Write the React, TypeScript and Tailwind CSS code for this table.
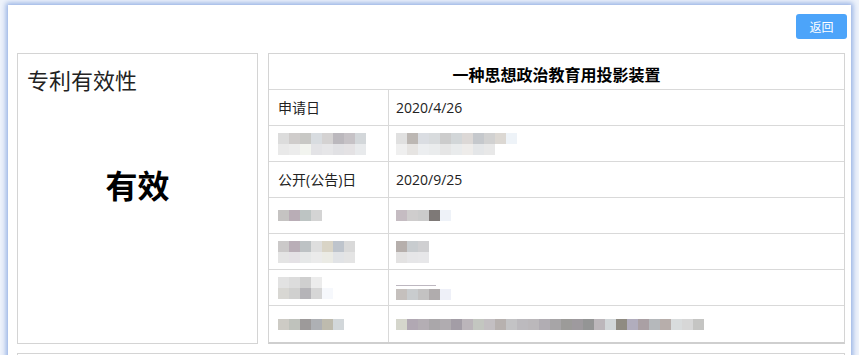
import React from "react";

type Row = { label?: string; value?: string; labelCells?: string[][]; valueCells?: string[][]; note?: boolean };

// pixelated (mosaicked) fields, one class per cell
const rows: Row[] = [
  { label: "申请日", value: "2020/4/26" },
  {
    labelCells: [
      ["bg-[#dcdcdc]", "bg-[#cfcccb]", "bg-[#c8c8c5]", "bg-[#d8dce0]", "bg-[#d4d2d2]", "bg-[#bbb8bd]", "bg-[#c6c2c6]", "bg-[#d3d7da]"],
      ["bg-[#e9e9e9]", "bg-[#ececec]", "bg-[#f2f4ef]", "bg-[#e3e3e6]", "bg-[#e6e6e8]", "bg-[#e1e1e4]", "bg-[#e4e2e4]", "bg-[#e8eaec]"],
    ],
    valueCells: [
      ["bg-[#e0e0e0]", "bg-[#bcb7b3]", "bg-[#dadde2]", "bg-[#d8dbdd]", "bg-[#cccccc]", "bg-[#d2d6d8]", "bg-[#dcd8d6]", "bg-[#c5c8cc]", "bg-[#d1d1d1]", "bg-[#dcd8d3]", "bg-[#eef3f8]"],
      ["bg-[#efefef]", "bg-[#e6e4e2]", "bg-[#eceef0]", "bg-[#eaeced]", "bg-[#e6e6e6]", "bg-[#e9ebec]", "bg-[#eeecea]", "bg-[#e4e6e8]", "bg-[#e8e8e8]", "bg-white", "bg-white"],
    ],
  },
  { label: "公开(公告)日", value: "2020/9/25" },
  {
    labelCells: [["bg-[#c5c3c2]", "bg-[#b9adb6]", "bg-[#bdc4c3]", "bg-[#d4d4d4]"]],
    valueCells: [["bg-[#c5bcc2]", "bg-[#cfcdcd]", "bg-[#cbcbcb]", "bg-[#7e7977]", "bg-[#eef2f8]"]],
  },
  {
    labelCells: [
      ["bg-[#cbc9c9]", "bg-[#b9aeb7]", "bg-[#bdc2c4]", "bg-[#dedede]", "bg-[#d9d4c6]", "bg-[#bec4cc]", "bg-[#d9d9d9]"],
      ["bg-[#e4e4e4]", "bg-[#e4e1e5]", "bg-[#e6e8e8]", "bg-[#ebebeb]", "bg-[#ebebe5]", "bg-[#e1e3e6]", "bg-[#e4e4e4]"],
    ],
    valueCells: [
      ["bg-[#b6afac]", "bg-[#c8cccf]", "bg-[#cfcfd1]"],
      ["bg-[#e3e2e2]", "bg-[#e6e6e8]", "bg-[#e7e7e9]"],
    ],
  },
  {
    labelCells: [
      ["bg-[#e2e2e2]", "bg-[#dcdcdc]", "bg-[#cfcfcf]", "bg-[#ececec]", "bg-white"],
      ["bg-[#d8d7d3]", "bg-[#d0d0cf]", "bg-[#b5b4b8]", "bg-[#d6d6d6]", "bg-[#f6f8fc]"],
    ],
    valueCells: [["bg-[#c5c0bd]", "bg-[#c9ccce]", "bg-[#c3c2c2]", "bg-[#b0acad]", "bg-[#eef0f8]"]],
    note: true,
  },
  {
    labelCells: [["bg-[#cdcbc5]", "bg-[#bfc2bc]", "bg-[#9d9a9a]", "bg-[#aeb0b4]", "bg-[#bebbae]", "bg-[#d2d7da]"]],
    valueCells: [
      [
        "bg-[#d5d6cc]", "bg-[#b1a8b3]", "bg-[#b4aeb4]", "bg-[#aaa7aa]", "bg-[#b0acb0]", "bg-[#a39da6]", "bg-[#bbb5ba]",
        "bg-[#c3c6c0]", "bg-[#c3bfc2]", "bg-[#b7b1af]", "bg-[#c3c3c5]", "bg-[#bcbabe]", "bg-[#bbb8bb]", "bg-[#b1adb3]",
        "bg-[#a7a5a7]", "bg-[#9c9b99]", "bg-[#9e9a9e]", "bg-[#949595]", "bg-[#bcb7bb]", "bg-[#d1d6d8]", "bg-[#8f8b82]",
        "bg-[#b1adbd]", "bg-[#aaa0a4]", "bg-[#b5b8bb]", "bg-[#b7aeab]", "bg-[#d9dcdd]", "bg-[#d7d7d7]", "bg-[#c5c5c3]",
      ],
    ],
  },
];

const Mosaic: React.FC<{ cells: string[][] }> = ({ cells }) => (
  <div className="flex flex-col blur-[0.4px]">
    {cells.map((line, i) => (
      <div key={i} className="flex">
        {line.map((c, j) => (
          <div key={j} className={`w-[11px] h-[11px] ${c}`} />
        ))}
      </div>
    ))}
  </div>
);

export default function App() {
  return (
    <div className="w-[859px] h-[355px] overflow-hidden bg-[#eef3fb] pl-[8px] pt-[5px] pr-[8px] font-['Open_Sans','Noto_Sans_CJK_SC',sans-serif] text-[#222]">
      <div className="bg-white h-[400px] shadow-[0_0_5px_2px_rgba(120,155,220,0.75)] pl-[9px] pr-[6px]">
        {/* top bar */}
        <div className="flex justify-end pt-[9px] pb-[14px] -mr-[2px]">
          <button className="w-[51px] h-[25px] rounded-[3px] bg-[#4ca4fa] text-white text-[12px] leading-none font-['Noto_Sans_CJK_SC',sans-serif]">
            返回
          </button>
        </div>

        <div className="flex gap-[10px]">
          {/* validity */}
          <div className="w-[241px] h-[291px] border border-[#d4d4d4] flex flex-col">
            <div className="pl-[9px] pt-[9px] text-[22px] leading-[33px] font-['Noto_Sans_CJK_SC',sans-serif]">专利有效性</div>
            <div className="mt-[68px] text-center text-[32px] leading-[40px] font-bold text-black font-['Noto_Sans_CJK_SC',sans-serif]">
              有效
            </div>
          </div>

          {/* details table */}
          <div className="flex-1 h-[291px] border border-[#d4d4d4] border-b-2 border-b-[#cfcfcf] flex flex-col">
            <div className="h-[36px] flex items-center justify-center border-b border-[#d9d9d9] text-[16px] font-bold text-black font-['Noto_Sans_CJK_SC',sans-serif] pt-[4px]">
              一种思想政治教育用投影装置
            </div>
            {rows.map((r, i) => (
              <div
                key={i}
                className={`grid grid-cols-[120px_1fr] h-[36px] text-[14px] ${i < rows.length - 1 ? "border-b border-[#d9d9d9]" : ""}`}
              >
                <div className="border-r border-[#d9d9d9] flex items-center pl-[9px]">
                  {r.label ? <span>{r.label}</span> : <Mosaic cells={r.labelCells!} />}
                </div>
                <div className="flex items-center pl-[7px]">
                  {r.value ? (
                    <span>{r.value}</span>
                  ) : (
                    <div className={r.note ? "flex flex-col pt-[10px]" : ""}>
                      {r.note && <div className="w-[40px] h-[1px] bg-[#bdb7c0] mb-[3px]" />}
                      <Mosaic cells={r.valueCells!} />
                    </div>
                  )}
                </div>
              </div>
            ))}
          </div>
        </div>

        {/* next panel */}
        <div className="mt-[9px] h-[40px] border border-[#d4d4d4]" />
      </div>
    </div>
  );
}
